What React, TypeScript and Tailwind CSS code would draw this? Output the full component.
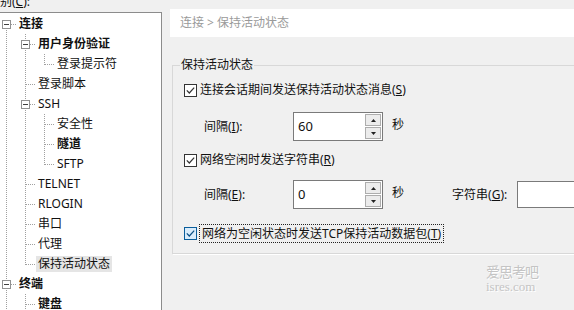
import React from 'react'

type Cell = 'full' | 'tee' | 'last' | 'first'

type Row = { label: string; cells: Cell[]; bold?: boolean; exp?: boolean; selected?: boolean }

const rows: Row[] = [
  { label: '连接', cells: ['first'], bold: true, exp: true },
  { label: '用户身份验证', cells: ['full', 'tee'], bold: true, exp: true },
  { label: '登录提示符', cells: ['full', 'full', 'last'] },
  { label: '登录脚本', cells: ['full', 'tee'] },
  { label: 'SSH', cells: ['full', 'tee'], exp: true },
  { label: '安全性', cells: ['full', 'full', 'tee'] },
  { label: '隧道', cells: ['full', 'full', 'tee'], bold: true },
  { label: 'SFTP', cells: ['full', 'full', 'last'] },
  { label: 'TELNET', cells: ['full', 'tee'] },
  { label: 'RLOGIN', cells: ['full', 'tee'] },
  { label: '串口', cells: ['full', 'tee'] },
  { label: '代理', cells: ['full', 'tee'] },
  { label: '保持活动状态', cells: ['full', 'last'], selected: true },
  { label: '终端', cells: ['tee'], bold: true, exp: true },
  { label: '键盘', cells: ['full', 'tee'], bold: true },
]

const dot = { stroke: '#a0a0a0', strokeDasharray: '1 1', shapeRendering: 'crispEdges' as const }

const TreeCell = ({ type, last, exp }: { type: Cell; last: boolean; exp?: boolean }) => {
  const y1 = type === 'first' ? 10 : 0
  const y2 = type === 'last' ? 11 : 20
  return (
    <svg width="19" height="20" className="shrink-0">
      <line x1="6.5" y1={y1} x2="6.5" y2={y2} style={dot} />
      {last && <line x1="7" y1="10.5" x2="17" y2="10.5" style={dot} />}
      {last && exp && (
        <g>
          <rect x="2.5" y="6.5" width="8" height="8" fill="#fff" stroke="#919191" shapeRendering="crispEdges" />
          <line x1="4" y1="10.5" x2="9" y2="10.5" stroke="#404040" shapeRendering="crispEdges" />
        </g>
      )}
    </svg>
  )
}

const Check = ({ hot }: { hot?: boolean }) => (
  <svg width="13" height="13" className="shrink-0">
    <rect x="0.5" y="0.5" width="12" height="12" fill={hot ? '#d9ecfb' : '#fff'} stroke={hot ? '#0a5d9b' : '#333'} shapeRendering="crispEdges" />
    <path d="M2.8 6.4 L5.3 9 L10.2 3.6" fill="none" stroke={hot ? '#0a4f85' : '#333'} strokeWidth="1.2" />
  </svg>
)

const Spinner = ({ value }: { value: string }) => (
  <div className="flex items-center shrink-0 w-[90px] h-[29px] border border-[#7a7a7a] bg-white pr-[1px]">
    <span className="flex-1 pl-[4px] text-[13px]">{value}</span>
    <div className="flex flex-col gap-[1px]">
      <div className="w-[16px] h-[12px] border border-[#adadad] bg-[#ececec] flex items-center justify-center">
        <svg width="5" height="3"><path d="M0 3 L2.5 0 L5 3 Z" fill="#222" /></svg>
      </div>
      <div className="w-[16px] h-[12px] border border-[#adadad] bg-[#ececec] flex items-center justify-center">
        <svg width="5" height="3"><path d="M0 0 L2.5 3 L5 0 Z" fill="#222" /></svg>
      </div>
    </div>
  </div>
)

const App = () => {
  return (
    <div className="w-[574px] h-[310px] overflow-hidden bg-[#f0f0f0] flex text-[12px] text-[#111] font-['Noto_Sans','Noto_Sans_CJK_SC',sans-serif]">
      <div className="w-[162px] shrink-0 flex flex-col">
        <div className="h-[12px] shrink-0 overflow-hidden">
          <div className="-mt-[6px] -ml-[12px] leading-[16px] whitespace-nowrap">类别(<u>C</u>):</div>
        </div>
        <div className="flex-1 min-h-0 overflow-hidden bg-white border-t border-r border-[#8c8c8c] pt-[1px]">
          {rows.map((r, i) => (
            <div key={i} className="flex items-center h-[20px]">
              {r.cells.map((c, j) => (
                <TreeCell key={j} type={c} last={j === r.cells.length - 1} exp={r.exp} />
              ))}
              <span
                className={`-ml-[2px] px-[2px] leading-[16px] whitespace-nowrap ${r.bold ? 'font-bold' : ''} ${r.selected ? 'bg-[#e5e5e5]' : ''}`}
              >
                {r.label}
              </span>
            </div>
          ))}
        </div>
      </div>

      <div className="flex-1 overflow-hidden pl-[8px] pt-[9px]">
        <div className="h-[28px] bg-white flex items-center pl-[10px] text-[#9a9a9a]">连接 &gt; 保持活动状态</div>

        <fieldset className="ml-[2px] mt-[20px] w-[460px] border border-[#d8d8d8] pb-[10px] shadow-[1px_1px_0_#fff]">
          <legend className="ml-[7px] px-[1px] leading-[16px]">保持活动状态</legend>
          <div className="pl-[11px] whitespace-nowrap">
            <div className="flex items-center h-[16px] mt-[9px] gap-[3px]">
              <Check />
              <span>连接会话期间发送保持活动状态消息(<u>S</u>)</span>
            </div>

            <div className="flex items-center mt-[14px]">
              <span className="w-[109px] shrink-0 pl-[20px]">间隔(<u>I</u>):</span>
              <Spinner value="60" />
              <span className="ml-[9px] -mt-[4px]">秒</span>
            </div>

            <div className="flex items-center h-[16px] mt-[11px] gap-[3px]">
              <Check />
              <span>网络空闲时发送字符串(<u>R</u>)</span>
            </div>

            <div className="flex items-center mt-[12px]">
              <span className="w-[109px] shrink-0 pl-[20px]">间隔(<u>E</u>):</span>
              <Spinner value="0" />
              <span className="ml-[9px] -mt-[4px] shrink-0">秒</span>
              <span className="ml-[48px] shrink-0">字符串(<u>G</u>):</span>
              <div className="ml-[10px] shrink-0 w-[80px] h-[27px] border border-[#7a7a7a] bg-white" />
            </div>

            <div className="flex items-center h-[19px] mt-[15px] gap-[2px]">
              <Check hot />
              <span className="border border-dotted border-[#222] px-[2px] leading-[17px]">网络为空闲状态时发送TCP保持活动数据包(<u>T</u>)</span>
            </div>
          </div>
        </fieldset>

        <div className="ml-[316px] mt-[9px] flex flex-col items-start text-[#c4c4c4] [text-shadow:1px_1px_0_#fff]">
          <span className="text-[14px] leading-[17px] tracking-[-1px]">爱思考吧</span>
          <span className="text-[13px] leading-[14px] font-['Liberation_Serif',serif]">isres.com</span>
        </div>
      </div>
    </div>
  )
}

export default App
